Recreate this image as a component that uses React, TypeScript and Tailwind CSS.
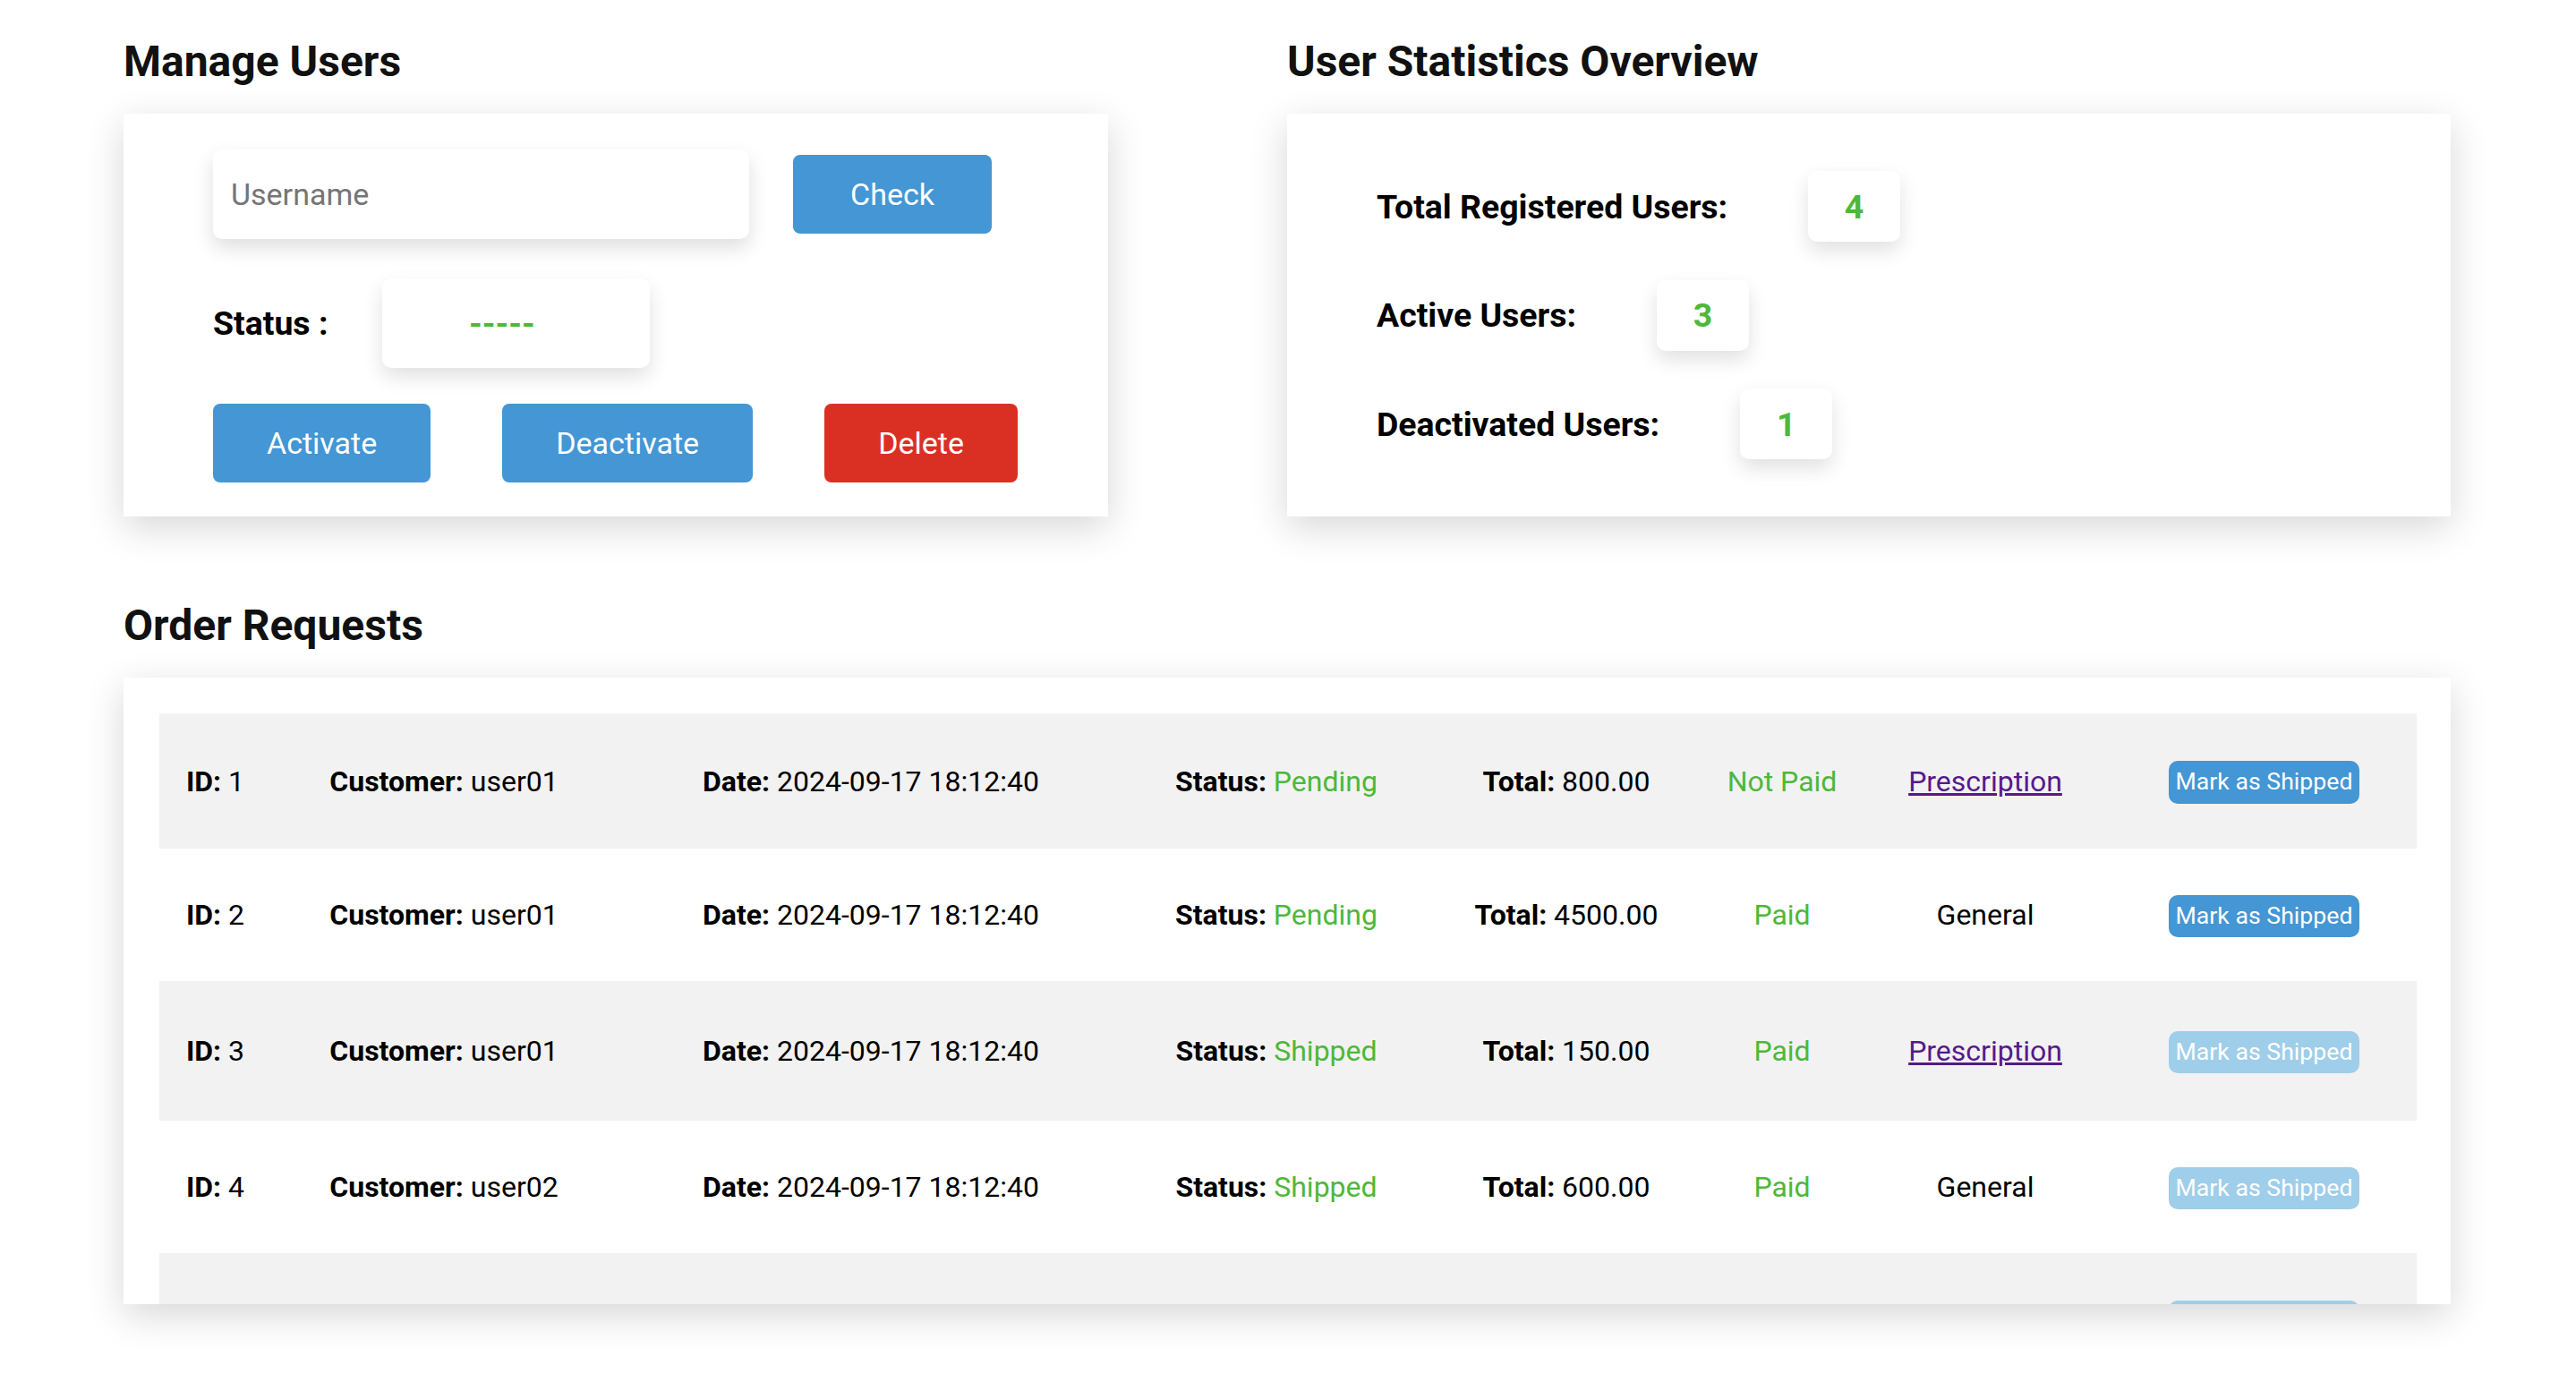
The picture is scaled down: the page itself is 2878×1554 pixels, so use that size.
import React from "react";

type Order = {
  id: number;
  customer: string;
  status: "Pending" | "Shipped";
  total: string;
  paid: string;
  kind: "Prescription" | "General";
  rowClass: string;
};

const orders: Order[] = [
  { id: 1, customer: "user01", status: "Pending", total: "800.00", paid: "Not Paid", kind: "Prescription", rowClass: "h-[151px] bg-[#f2f2f2]" },
  { id: 2, customer: "user01", status: "Pending", total: "4500.00", paid: "Paid", kind: "General", rowClass: "h-[148px] bg-white" },
  { id: 3, customer: "user01", status: "Shipped", total: "150.00", paid: "Paid", kind: "Prescription", rowClass: "h-[156px] bg-[#f2f2f2]" },
  { id: 4, customer: "user02", status: "Shipped", total: "600.00", paid: "Paid", kind: "General", rowClass: "h-[148px] bg-white" },
  { id: 5, customer: "user02", status: "Shipped", total: "320.00", paid: "Paid", kind: "General", rowClass: "h-[151px] bg-[#f2f2f2]" },
];

function Heading({ children }: { children: React.ReactNode }) {
  return <h2 className="text-[48px] leading-[56px] font-bold text-[#111] mb-[30px]">{children}</h2>;
}

function StatRow({ label, value }: { label: string; value: number }) {
  return (
    <div className="flex items-center">
      <h3 className="text-[37.44px] leading-[44px] font-bold text-black">{label}</h3>
      <div className="ml-[90px] w-[103px] h-[79px] rounded-[10px] bg-white shadow-[0_10px_22px_rgba(0,0,0,0.12)] flex items-center justify-center">
        <span className="text-[37.44px] leading-[44px] font-bold text-[#4db839]">{value}</span>
      </div>
    </div>
  );
}

function ManageUsers() {
  return (
    <div className="w-[1100px]">
      <Heading>Manage Users</Heading>
      <div className="h-[450px] bg-white shadow-[0_12px_40px_rgba(0,0,0,0.16)] pt-[40px] px-[100px]">
        <div className="flex items-center gap-[49px]">
          <input
            placeholder="Username"
            className="w-[599px] h-[100px] rounded-[10px] bg-white px-[20px] text-[34px] text-black placeholder:text-[#757575] shadow-[0_10px_22px_rgba(0,0,0,0.13)] outline-none"
          />
          <button className="w-[222px] h-[88px] rounded-[8px] bg-[#4496d4] text-white text-[34px]">Check</button>
        </div>
        <div className="mt-[44px] flex items-center">
          <h3 className="text-[37.44px] leading-[44px] font-bold text-black">Status :</h3>
          <div className="ml-[61px] w-[299px] h-[100px] rounded-[10px] bg-white shadow-[0_10px_22px_rgba(0,0,0,0.12)] flex items-center justify-center">
            <span className="text-[37.44px] font-bold text-[#4db839] pr-[32px]">-----</span>
          </div>
        </div>
        <div className="mt-[40px] flex gap-[80px]">
          <button className="h-[88px] px-[60px] rounded-[8px] bg-[#4496d4] text-white text-[34px]">Activate</button>
          <button className="h-[88px] px-[60px] rounded-[8px] bg-[#4496d4] text-white text-[34px]">Deactivate</button>
          <button className="h-[88px] px-[60px] rounded-[8px] bg-[#da3024] text-white text-[34px]">Delete</button>
        </div>
      </div>
    </div>
  );
}

function UserStats() {
  return (
    <div className="w-[1300px]">
      <Heading>User Statistics Overview</Heading>
      <div className="h-[450px] bg-white shadow-[0_12px_40px_rgba(0,0,0,0.16)] py-[64px] px-[100px] flex flex-col gap-[42.5px]">
        <StatRow label="Total Registered Users:" value={4} />
        <StatRow label="Active Users:" value={3} />
        <StatRow label="Deactivated Users:" value={1} />
      </div>
    </div>
  );
}

function OrderRequests() {
  return (
    <div className="mt-[94px]">
      <Heading>Order Requests</Heading>
      <div className="h-[700px] overflow-hidden bg-white shadow-[0_12px_40px_rgba(0,0,0,0.16)] pt-[40px] px-[40px]">
        <table className="w-full table-fixed text-[32px] text-black">
          <colgroup>
            <col className="w-[125px]" />
            <col className="w-[386px]" />
            <col className="w-[568px]" />
            <col className="w-[338px]" />
            <col className="w-[310px]" />
            <col className="w-[172px]" />
            <col className="w-[282px]" />
            <col className="w-[341px]" />
          </colgroup>
          <tbody>
            {orders.map((o) => {
              const shipped = o.status === "Shipped";
              return (
                <tr key={o.id} className={o.rowClass}>
                  <td className="text-center align-middle whitespace-nowrap">
                    <b>ID:</b> {o.id}
                  </td>
                  <td className="text-center align-middle whitespace-nowrap">
                    <b>Customer:</b> {o.customer}
                  </td>
                  <td className="text-center align-middle whitespace-nowrap">
                    <b>Date:</b> 2024-09-17 18:12:40
                  </td>
                  <td className="text-center align-middle whitespace-nowrap">
                    <b>Status:</b> <span className="text-[#4db839]">{o.status}</span>
                  </td>
                  <td className="text-center align-middle whitespace-nowrap">
                    <b>Total:</b> {o.total}
                  </td>
                  <td className="text-center align-middle whitespace-nowrap text-[#4db839]">{o.paid}</td>
                  <td className="text-center align-middle whitespace-nowrap">
                    {o.kind === "Prescription" ? (
                      <a href="#" className="text-[#551a8b] underline">Prescription</a>
                    ) : (
                      "General"
                    )}
                  </td>
                  <td className="text-center align-middle whitespace-nowrap">
                    <button
                      disabled={shipped}
                      className={
                        shipped
                          ? "px-[8px] py-[8px] rounded-[10px] bg-[#9fceea] text-white text-[26.67px] leading-[31.25px]"
                          : "px-[8px] py-[8px] rounded-[10px] bg-[#4496d4] text-white text-[26.67px] leading-[31.25px]"
                      }
                    >
                      Mark as Shipped
                    </button>
                  </td>
                </tr>
              );
            })}
          </tbody>
        </table>
      </div>
    </div>
  );
}

export default function App() {
  return (
    <div className="min-h-screen bg-white font-['Roboto','Liberation_Sans',sans-serif] px-[138px] pt-[41px] pb-[100px]">
      <div className="w-[2600px]">
        <div className="flex gap-[200px]">
          <ManageUsers />
          <UserStats />
        </div>
        <OrderRequests />
      </div>
    </div>
  );
}
